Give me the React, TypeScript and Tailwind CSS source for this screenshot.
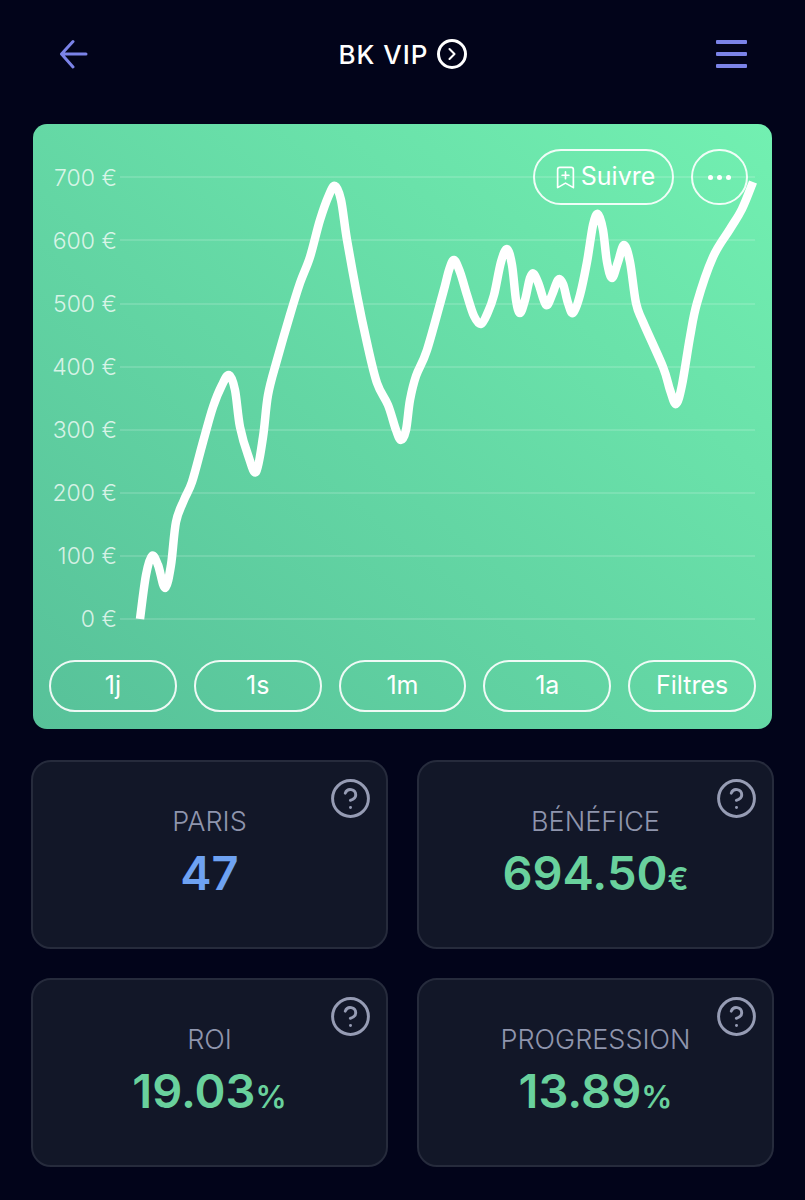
import { BookmarkPlus, ChevronRight, CircleHelp } from "lucide-react";

const yLabels = ["700 €", "600 €", "500 €", "400 €", "300 €", "200 €", "100 €", "0 €"];
const gridYs = [177, 240, 304, 367, 430, 493, 556, 619];
const ranges = ["1j", "1s", "1m", "1a", "Filtres"];

// traced from the picture, in page pixels
const points: [number, number][] = [
  [140, 619], [146, 575], [152, 556], [158, 565], [165, 588], [171, 565], [176, 522], [184, 500], [192, 482],
  [203, 442], [213, 407], [222, 385], [229, 375], [235, 390], [240, 427], [248, 455], [256, 472], [263, 437], [268, 395],
  [277, 360], [290, 315], [300, 283], [310, 257], [320, 220], [329, 195], [335, 186], [341, 200], [347, 240],
  [357, 295], [367, 343], [377, 383], [388, 405], [396, 430], [401, 440], [406, 430], [410, 400], [416, 376], [427, 350],
  [443, 293], [449, 270], [454, 260], [460, 272], [467, 295], [474, 316], [481, 324], [488, 312], [494, 295], [501, 262], [507, 249],
  [512, 265], [516, 300], [520, 313], [525, 300], [530, 278], [534, 274], [539, 285], [546, 305], [552, 295], [558, 280], [563, 284], [568, 303], [573, 313],
  [580, 295], [587, 262], [593, 225], [598, 214], [603, 230], [607, 262], [612, 278], [618, 262], [624, 245], [630, 262], [636, 303],
  [643, 322], [663, 367], [670, 390], [676, 404], [682, 385], [690, 337], [697, 303], [713, 257], [730, 229], [742, 209], [753, 182],
];

function smoothPath(pts: [number, number][]) {
  let d = `M${pts[0][0]} ${pts[0][1]}`;
  for (let i = 0; i < pts.length - 1; i++) {
    const p0 = pts[Math.max(i - 1, 0)];
    const p1 = pts[i];
    const p2 = pts[i + 1];
    const p3 = pts[Math.min(i + 2, pts.length - 1)];
    const c1x = p1[0] + (p2[0] - p0[0]) / 6;
    const c1y = p1[1] + (p2[1] - p0[1]) / 6;
    const c2x = p2[0] - (p3[0] - p1[0]) / 6;
    const c2y = p2[1] - (p3[1] - p1[1]) / 6;
    d += ` C${c1x.toFixed(1)} ${c1y.toFixed(1)} ${c2x.toFixed(1)} ${c2y.toFixed(1)} ${p2[0]} ${p2[1]}`;
  }
  return d;
}

function StatCard({ label, value, unit, blue }: { label: string; value: string; unit?: string; blue?: boolean }) {
  return (
    <div className="relative h-[189px] rounded-[20px] border-2 border-[#262b3c] bg-[#121728] pt-[41px] text-center">
      <CircleHelp size={43} strokeWidth={1.65} className="absolute right-[14px] top-[15px] text-[#969cb4]" />
      <div className="text-[27px] leading-[38px] font-light text-[#8f95ad]">{label}</div>
      <div className={`mt-[1px] text-[47px] leading-[62px] font-semibold ${blue ? "text-[#6ea2f2]" : "text-[#69d19d]"}`}>
        {value}
        {unit && <span className="text-[31px]">{unit}</span>}
      </div>
    </div>
  );
}

export default function App() {
  return (
    <div className="h-[1200px] bg-[#02041a] font-['Inter',sans-serif] text-white">
      <header className="flex h-[124px] items-start justify-between pl-[59px] pr-[58px] pt-[39px]">
        <svg width="30" height="30" viewBox="0 0 30 30" fill="none" stroke="#7b83e8" strokeWidth="3" strokeLinecap="round" strokeLinejoin="round">
          <path d="M14 2.5 2.5 15 14 28M2.5 15H27" />
        </svg>
        <div className="flex h-[30px] items-center gap-[8px] text-[26px] font-medium tracking-[1px]">
          BK VIP
          <span className="flex h-[30px] w-[30px] items-center justify-center rounded-full border-[3px] border-white">
            <ChevronRight size={20} strokeWidth={2.5} />
          </span>
        </div>
        <svg width="31" height="30" viewBox="0 0 31 30" fill="#7b83e8">
          <rect x="0" y="1" width="31" height="4" rx="1" />
          <rect x="0" y="13" width="31" height="4" rx="1" />
          <rect x="0" y="25" width="31" height="4" rx="1" />
        </svg>
      </header>

      <section className="relative mx-[33px] h-[605px] rounded-[14px] bg-gradient-to-tr from-[#57c199] to-[#72f0b1] pl-4 pr-4 pt-[39px]">
        <div className="flex h-[470px]">
          <div className="flex w-[68px] flex-col justify-between pt-px text-right text-[23px] leading-[28px] font-light text-white/75">
            {yLabels.map((label) => (
              <div key={label}>{label}</div>
            ))}
          </div>
          <svg className="ml-[3px] flex-1 overflow-visible" viewBox="120 163 636 470" width="636" height="470" fill="none">
            {gridYs.map((y) => (
              <line key={y} x1="120" x2="755" y1={y} y2={y} stroke="#ffffff" strokeOpacity="0.14" strokeWidth="2" />
            ))}
            <path d={smoothPath(points)} stroke="#ffffff" strokeWidth="8.5" strokeLinejoin="round" />
          </svg>
        </div>

        <div className="absolute right-[24px] top-[25px] flex gap-[17px]">
          <button className="flex h-[56px] w-[141px] items-center justify-center gap-[2px] rounded-full border-2 border-white/90 text-[25px]">
            <BookmarkPlus size={27} strokeWidth={1.5} />
            Suivre
          </button>
          <button className="flex h-[56px] w-[57px] items-center justify-center gap-[4px] rounded-full border-2 border-white/90">
            <span className="h-[5px] w-[5px] rounded-full bg-white" />
            <span className="h-[5px] w-[5px] rounded-full bg-white" />
            <span className="h-[5px] w-[5px] rounded-full bg-white" />
          </button>
        </div>

        <div className="mt-[27px] grid grid-cols-5 gap-[17px]">
          {ranges.map((r) => (
            <button key={r} className="h-[52px] rounded-full border-2 border-white/90 text-[25px]">
              {r}
            </button>
          ))}
        </div>
      </section>

      <div className="mt-[31px] grid grid-cols-2 gap-[29px] px-[31px]">
        <StatCard label="PARIS" value="47" blue />
        <StatCard label="BÉNÉFICE" value="694.50" unit="€" />
        <StatCard label="ROI" value="19.03" unit="%" />
        <StatCard label="PROGRESSION" value="13.89" unit="%" />
      </div>
    </div>
  );
}
